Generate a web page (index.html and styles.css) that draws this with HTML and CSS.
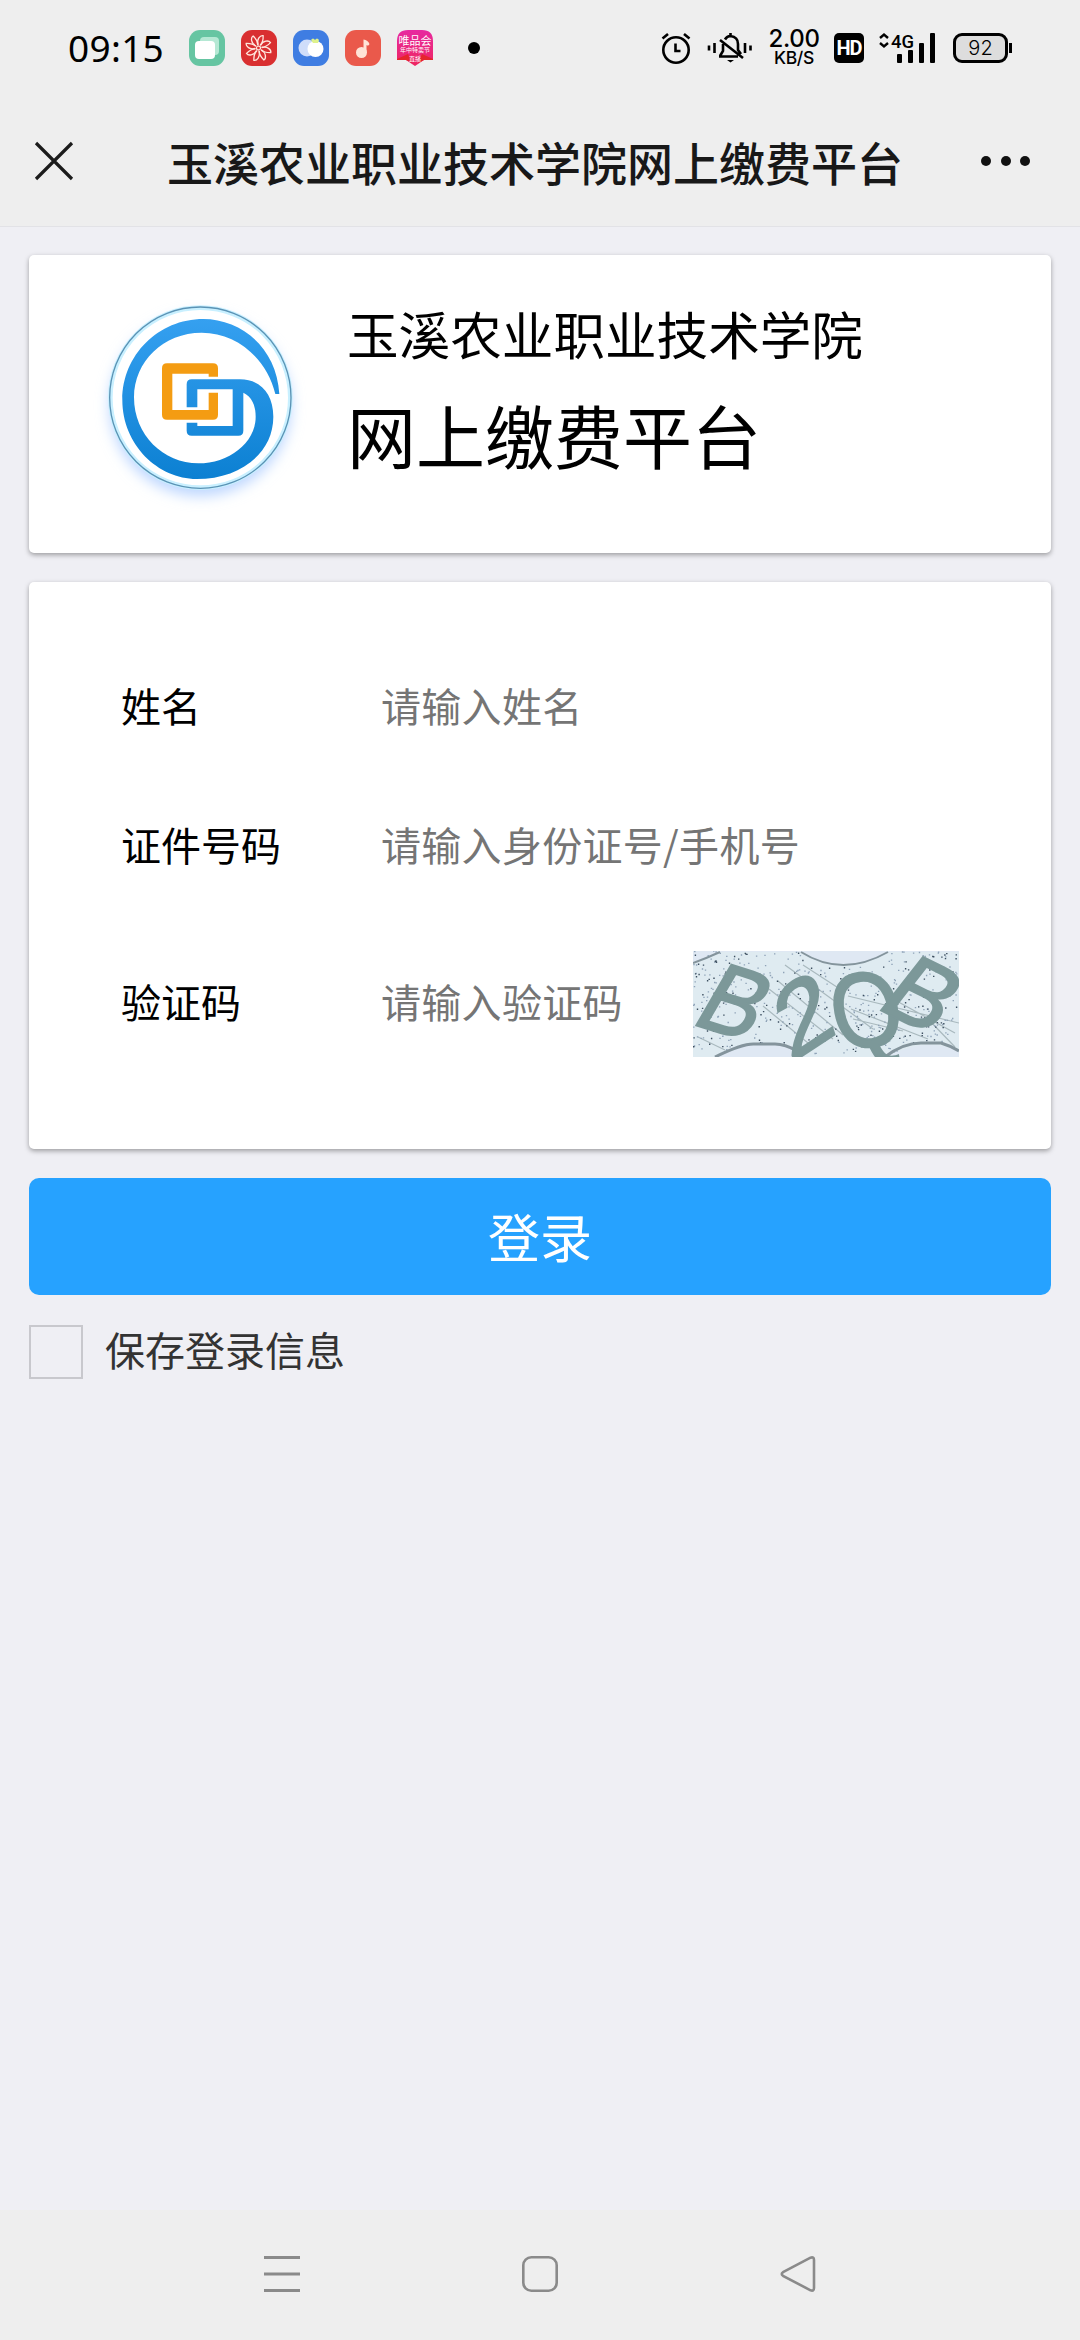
FILE: index.html
```html
<!DOCTYPE html>
<html lang="zh-CN">
<head>
<meta charset="utf-8">
<title>玉溪农业职业技术学院网上缴费平台</title>
<link rel="stylesheet" href="styles.css">
</head>
<body>
<div class="screen">
  <div class="status">
    <div class="status-left">
      <span class="clock">09:15</span>
      <div class="apps">
        <svg class="app" viewBox="0 0 36 36"><rect width="36" height="36" rx="11" fill="#66c5a2"/><rect x="11" y="7" width="19" height="18" rx="4" fill="#b5e8d4"/><rect x="6" y="11" width="20" height="18" rx="4" fill="#fff"/></svg>
        <svg class="app" viewBox="0 0 36 36"><rect width="36" height="36" rx="11" fill="#d92f30"/><g fill="none" stroke="#ffe6dc" stroke-width="1.300" transform="translate(17.500 18) rotate(12)"><path id="petal" d="M-1-3C-4-8-1-13 2-13C3-9 3-6 1-3"/><use href="#petal" transform="rotate(45)"/><use href="#petal" transform="rotate(90)"/><use href="#petal" transform="rotate(135)"/><use href="#petal" transform="rotate(180)"/><use href="#petal" transform="rotate(225)"/><use href="#petal" transform="rotate(270)"/><use href="#petal" transform="rotate(315)"/><circle r="2"/></g></svg>
        <svg class="app" viewBox="0 0 36 36"><rect width="36" height="36" rx="11" fill="#3f7de2"/><circle cx="14" cy="18" r="8.500" fill="#cfddfa"/><circle cx="22.500" cy="19" r="8" fill="#fff"/><path d="M18 10q2-3 4 0q2-3 4 0l-1 3h-5z" fill="#dff28c"/></svg>
        <svg class="app" viewBox="0 0 36 36"><rect width="36" height="36" rx="11" fill="#ea594b"/><circle cx="16.500" cy="22.500" r="5.500" fill="#ffe3d6"/><path d="M18.500 23V9.500Q23 10 24.500 14Q23.500 16.500 21.500 15V23z" fill="#ffe3d6"/></svg>
        <svg class="app" viewBox="0 0 36 36"><defs><linearGradient id="vip" x2="0" y2="1"><stop offset="0" stop-color="#e72aa0"/><stop offset="1" stop-color="#ee2560"/></linearGradient></defs><path d="M11 0H25Q36 0 36 11V30H27L18 36L9 30H0V11Q0 0 11 0z" fill="url(#vip)"/><path d="M0 29L11 24L15 33L9 30H0zM36 29L25 24L21 33L27 30H36z" fill="#e5252d"/><text class="vip-name" x="18" y="15" text-anchor="middle">唯品会</text><text class="vip-sub" x="18" y="22" text-anchor="middle">年中特卖节</text><text class="vip-sub" x="18" y="31" text-anchor="middle">直播</text></svg>
      </div>
      <i class="more-dot"></i>
    </div>
    <div class="status-right">
      <svg class="alarm" width="30" height="32" viewBox="0 0 30 32" fill="none" stroke="#000" stroke-width="2.600"><circle cx="15" cy="18" r="12.700"/><path d="M14.500 11.500V19H19.500M1.500 6.500L7 2M28.500 6.500L23 2"/></svg>
      <svg class="bell" width="46" height="32" viewBox="0 0 46 32" fill="none" stroke="#000" stroke-width="2.600"><path d="M2 13.500V18.500M7.500 11V21M38 11V21M43.500 13.500V18.500"/><path d="M12 24.500H31M13 24L16 19V12M18 7.500Q20 4 23.500 4Q31 5 31 12V18L34 22M23.500 1V4M13 8L36 26"/><path d="M20 28H27L23.500 30.500z" fill="#000" stroke="none"/></svg>
      <span class="speed"><b class="rate">2.00</b><b class="unit">KB/S</b></span>
      <span class="hd">HD</span>
      <svg class="signal" width="57" height="32" viewBox="0 0 57 32"><path d="M1 6L5 2.500L9 6M1 11L5 14.500L9 11" fill="none" stroke="#000" stroke-width="2.400"/><text class="net" x="12" y="15.500" textLength="23" lengthAdjust="spacingAndGlyphs">4G</text><g><rect x="18" y="22" width="5" height="9" rx="1"/><rect x="29" y="18" width="5" height="13" rx="1"/><rect x="40" y="11" width="5" height="20" rx="1"/><rect x="51" y="1" width="5" height="30" rx="1"/></g></svg>
      <span class="battery">92</span>
    </div>
  </div>

  <header class="titlebar">
    <svg class="close" width="38" height="38" viewBox="0 0 38 38"><path d="M1 1L37 37M37 1L1 37" stroke="#1b1b1b" stroke-width="3.200"/></svg>
    <h1 class="title">玉溪农业职业技术学院网上缴费平台</h1>
    <div class="menu"><i></i><i></i><i></i></div>
  </header>

  <main class="page">
    <section class="card brand">
      <svg class="logo" viewBox="0 0 720 720">
        <defs>
          <linearGradient id="swirl" x2="0" y2="1"><stop offset="0" stop-color="#35a0f0"/><stop offset="1" stop-color="#0c80d2"/></linearGradient>
          <filter id="glow" x="-20%" y="-20%" width="140%" height="140%"><feGaussianBlur stdDeviation="20"/></filter>
        </defs>
        <circle cx="361" cy="376" r="272" fill="#bcd6ff" filter="url(#glow)"/>
        <circle cx="361" cy="353" r="270" fill="#fff" stroke="#c9f0ff" stroke-width="14"/>
        <circle cx="361" cy="353" r="272" fill="none" stroke="#5b93b5" stroke-width="4"/>
        <path fill="url(#swirl)" d="M598 342C590 200 480 117 370 117C235 117 127 225 127 360C127 495 235 597 350 597C480 597 580 520 580 410C580 340 540 298 480 298H335Q320 298 320 313V382H352V328H458V438H352V428H320V452Q320 467 335 467H475Q490 467 490 452V338C515 350 527 375 527 410C527 490 445 550 355 550C250 550 162 465 162 352C162 245 250 158 365 158C470 158 560 235 586 342Z"/>
        <path fill="#f49c12" d="M414 290V265Q414 250 399 250H261Q246 250 246 265V404Q246 419 261 419H399Q414 419 414 404V338H386V390H277V281H386V290Z"/>
      </svg>
      <div class="brand-text">
        <div class="school">玉溪农业职业技术学院</div>
        <div class="platform">网上缴费平台</div>
      </div>
    </section>

    <section class="card form">
      <label class="row"><span class="label">姓名</span><input class="field" type="text" placeholder="请输入姓名"></label>
      <label class="row"><span class="label">证件号码</span><input class="field" type="text" placeholder="请输入身份证号/手机号"></label>
      <div class="row code-row"><span class="label">验证码</span><input class="field" type="text" placeholder="请输入验证码">
        <svg class="captcha" viewBox="0 0 266 106">
          <rect width="266" height="106" fill="#dfe8f3"/>
          <path d="M0 12L27 1H108Q150 25 195 1H266V99Q225 86 195 106H112Q85 84 50 96L22 106H0Z" fill="#dfebf1"/>
          <g stroke="#a9b9be" stroke-width="1.200" fill="none"><path d="M92 14L180 78M110 14L150 40M70 55L115 92M76 38L140 88M85 30L150 84M155 45L266 72M158 58L235 88M160 68L210 80M200 48L262 82M5 86L32 99M235 68L262 96"/></g>
          <g id="specks"></g>
          <g stroke="#84949c" stroke-width="2" fill="none"><path d="M0 12Q14 7 27 1M108 1C135 18 165 18 195 1"/><path d="M22 106Q50 92 62 93H82Q92 93 104 100M192 106Q210 92 228 92H248Q258 95 266 100" stroke-width="3"/></g>
          <g class="captcha-text"><text transform="matrix(.88 .28 -.51 .88 -4 72)">B</text><text transform="matrix(.88 -.58 .32 .95 97 113)">2</text><text transform="matrix(.9 -.1 .2 1.05 145 99)">Q</text><text transform="matrix(.86 .43 -.61 .78 181 56)">B</text></g>
        </svg>
      </div>
    </section>

    <button class="login" type="button">登录</button>
    <label class="remember"><input class="check" type="checkbox"><span class="remember-text">保存登录信息</span></label>
  </main>

  <nav class="navbar">
    <svg width="36" height="38" viewBox="0 0 36 38" stroke="#8a8a8a" stroke-width="3"><path d="M0 2.500H36M0 19H36M0 35.500H36"/></svg>
    <svg width="36" height="38" viewBox="0 0 36 38" fill="none" stroke="#8a8a8a" stroke-width="2.600"><rect x="1.300" y="2.300" width="33.400" height="33.400" rx="8"/></svg>
    <svg width="36" height="38" viewBox="0 0 36 38" fill="none" stroke="#8a8a8a" stroke-width="2.600"><path d="M3 17.200L30.500 2.700Q34 1.500 34 5V33Q34 36.500 30.500 35.300L3 20.800Q0.500 19 3 17.200Z"/></svg>
  </nav>
</div>
<script src="script.js"></script>
</body>
</html>
```
FILE: styles.css
```css
* { box-sizing: border-box; }

body {
  margin: 0;
  background: #efeff4;
  font-family: "Noto Sans CJK SC", sans-serif;
  color: #000;
}

svg { display: block; flex: none; overflow: visible; }

.screen {
  width: 1080px;
  height: 2340px;
  display: flex;
  flex-direction: column;
}

.status {
  height: 96px;
  background: #eee;
  display: flex;
  justify-content: space-between;
  padding: 0 68px 0 68px;
}

.status-left, .status-right { display: flex; align-items: center; }

.clock {
  width: 121px;
  font: 37px/96px "Noto Sans", sans-serif;
  letter-spacing: 0.3px;
}

.apps { display: flex; gap: 16px; }
.app { width: 36px; height: 36px; }
.vip-name { font-size: 11px; fill: #fff; }
.vip-sub { font-size: 6px; fill: #fff; }

.more-dot {
  width: 12px;
  height: 12px;
  margin-left: 35px;
  border-radius: 50%;
  background: #000;
}

.bell { margin-left: 16px; }

.speed {
  width: 52px;
  margin-left: 15px;
  display: flex;
  flex-direction: column;
  align-items: center;
  font-family: Inter, sans-serif;
}
.speed b { font-weight: 500; }
.rate { font-size: 24px; line-height: 20px; letter-spacing: -0.3px; }
.unit { font-size: 17.5px; line-height: 18px; letter-spacing: -0.3px; }

.hd {
  width: 30px;
  height: 30px;
  margin-left: 14px;
  border-radius: 5px;
  background: #000;
  color: #fff;
  font: 700 20px/30px "Liberation Sans Narrow", Roboto, sans-serif;
  letter-spacing: -1px;
  text-align: center;
}

.signal { margin-left: 15px; }
.net { font: 500 19px Roboto, sans-serif; }

.battery {
  position: relative;
  width: 55px;
  height: 30px;
  margin: 0 4px 0 17px;
  border: 3px solid #000;
  border-radius: 9px;
  background: #ddd;
  font: 300 20px/24px Inter, sans-serif;
  text-align: center;
}
.battery::after {
  content: "";
  position: absolute;
  right: -7px;
  top: 7px;
  width: 3px;
  height: 10px;
  background: #000;
}

.titlebar {
  height: 131px;
  background: #eee;
  border-bottom: 1px solid #e2e2e6;
  display: flex;
  align-items: center;
  padding: 0 50px 0 35px;
}

.title {
  flex: 1;
  margin: 0 0 0 94px;
  font-size: 46px;
  line-height: 66px;
  font-weight: 500;
  color: #181818;
}

.menu { display: flex; gap: 9.5px; }
.menu i { width: 10px; height: 10px; border-radius: 50%; background: #111; }

.page {
  flex: 1;
  padding: 28px 29px 0;
  display: flex;
  flex-direction: column;
}

.card {
  background: #fff;
  border-radius: 5px;
  box-shadow: 0 2px 5px rgba(0, 0, 0, .35);
}

.brand {
  height: 298px;
  margin-bottom: 29px;
  padding: 25px 0 0 51px;
  display: flex;
}
.logo { width: 240px; height: 240px; }
.brand-text { margin-left: 27px; }
.school { font-size: 51.6px; line-height: 76px; margin-top: 15px; }
.platform { font-size: 69px; line-height: 100px; margin-top: 13px; }

.form {
  height: 567px;
  padding: 88px 92px 0 92px;
  font-size: 40px;
}
.row { display: flex; align-items: center; height: 70px; margin-bottom: 69px; }
.label { width: 260px; flex: none; }
.field {
  flex: 1;
  min-width: 0;
  height: 70px;
  padding: 0;
  border: 0;
  background: none;
  font: inherit;
  letter-spacing: 0.3px;
}
.field::placeholder { color: #757575; }
.code-row { height: 106px; }
.captcha { width: 266px; height: 106px; margin-top: 6px; overflow: hidden; }
.captcha-text { font: 100px "Liberation Sans", sans-serif; fill: #7c9899; stroke: #7c9899; stroke-width: 2; }

.login {
  height: 117px;
  margin-top: 29px;
  padding: 0 0 3px;
  border: 0;
  border-radius: 10px;
  background: #26a2ff;
  color: #fff;
  font: 52px "Noto Sans CJK SC", sans-serif;
}

.remember {
  display: flex;
  margin-top: 30px;
  height: 54px;
  gap: 22px;
  font-size: 40px;
  color: #333;
}
.remember-text { line-height: 48px; }
.check {
  appearance: none;
  width: 54px;
  height: 54px;
  margin: 0;
  border: 2px solid #c8c8cd;
}

.navbar {
  height: 130px;
  background: #eee;
  display: flex;
  justify-content: space-between;
  padding: 45px 264px 0;
}
```
FILE: script.js
```js
// Scatter deterministic noise specks over the captcha band.
var seed = 7;
function rand() {
  seed = (seed * 16807) % 2147483647;
  return seed / 2147483647;
}
var d1 = "", d2 = "";
for (var i = 0; i < 620; i++) {
  var x = rand() * 264, y = rand() * 104;
  if (y < 16 && x > 115 && x < 190) continue;
  if (y > 92 && ((x > 40 && x < 105) || x > 205)) continue;
  var dot = "M" + x.toFixed(1) + " " + y.toFixed(1) + "h1.4";
  if (i % 3) d1 += dot; else d2 += dot;
}
document.getElementById("specks").innerHTML =
  '<path d="' + d1 + '" stroke="#8fa3b8" stroke-width="1.3"/>' +
  '<path d="' + d2 + '" stroke="#3d4f60" stroke-width="1.4"/>';
```
